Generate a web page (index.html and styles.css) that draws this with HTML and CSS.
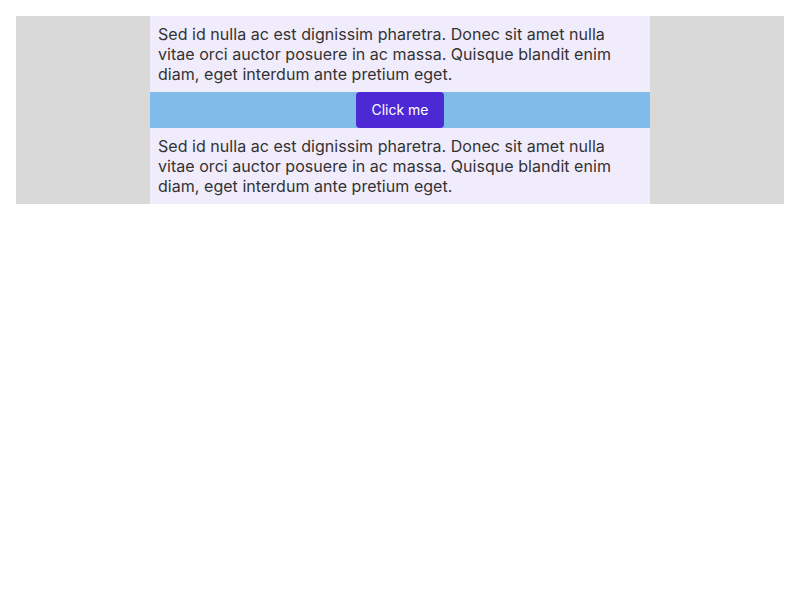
FILE: index.html
```html
<!DOCTYPE html>
<html>
<head>
<meta charset="utf-8">
<link rel="stylesheet" href="styles.css">
</head>
<body>
<div class="outer">
  <div class="column">
    <p class="text">Sed id nulla ac est dignissim pharetra. Donec sit amet nulla vitae orci auctor posuere in ac massa. Quisque blandit enim diam, eget interdum ante pretium eget.</p>
    <div class="band"><button class="btn">Click me</button></div>
    <p class="text">Sed id nulla ac est dignissim pharetra. Donec sit amet nulla vitae orci auctor posuere in ac massa. Quisque blandit enim diam, eget interdum ante pretium eget.</p>
  </div>
</div>
</body>
</html>
```
FILE: styles.css
```css
html, body { margin: 0; padding: 0; background: #fff; }
body { padding: 16px; font-family: Inter, "Noto Sans", sans-serif; }
.outer { background: #d9d9d9; display: flex; justify-content: center; }
.column { width: 500px; background: #f0ecfc; }
.text { margin: 0; padding: 8px; font-size: 16px; line-height: 20px; color: #333; letter-spacing: 0.04px; }
.band { background: #80bbea; display: flex; justify-content: center; }
.btn { font-family: Inter, "Noto Sans", sans-serif; font-size: 14px; line-height: 20px; height: 36px; padding: 0 15px; border: none; border-radius: 4px; background: #4c29d4; color: #fff; }
```
